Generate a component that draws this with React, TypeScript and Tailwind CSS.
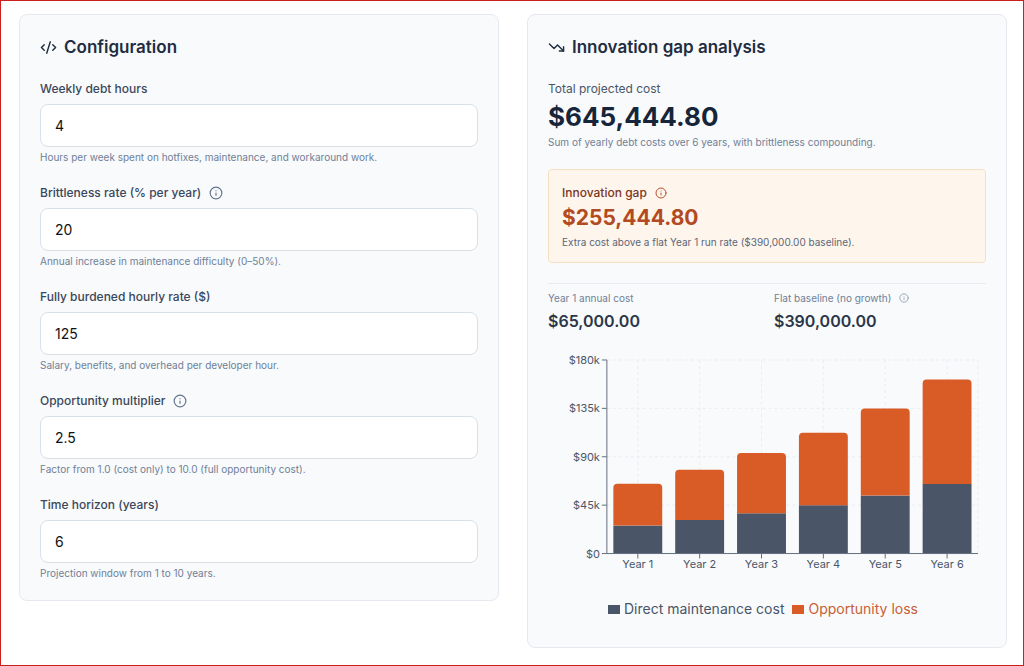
import { useState } from "react";
import { CodeXml, Info, TrendingDown } from "lucide-react";

const fields = [
  {
    id: "debt-hours",
    label: "Weekly debt hours",
    value: "4",
    hint: "Hours per week spent on hotfixes, maintenance, and workaround work.",
    info: false,
  },
  {
    id: "brittleness",
    label: "Brittleness rate (% per year)",
    value: "20",
    hint: "Annual increase in maintenance difficulty (0–50%).",
    info: true,
  },
  {
    id: "hourly-rate",
    label: "Fully burdened hourly rate ($)",
    value: "125",
    hint: "Salary, benefits, and overhead per developer hour.",
    info: false,
  },
  {
    id: "multiplier",
    label: "Opportunity multiplier",
    value: "2.5",
    hint: "Factor from 1.0 (cost only) to 10.0 (full opportunity cost).",
    info: true,
  },
  {
    id: "horizon",
    label: "Time horizon (years)",
    value: "6",
    hint: "Projection window from 1 to 10 years.",
    info: false,
  },
];

// yearly cost in thousands
const years = [
  { name: "Year 1", direct: 26, loss: 39 },
  { name: "Year 2", direct: 31.2, loss: 46.8 },
  { name: "Year 3", direct: 37.44, loss: 56.16 },
  { name: "Year 4", direct: 44.93, loss: 67.39 },
  { name: "Year 5", direct: 53.91, loss: 80.87 },
  { name: "Year 6", direct: 64.7, loss: 97.04 },
];

const ticks = [0, 45, 90, 135, 180];

const plot = { left: 59, right: 431, top: 8, bottom: 202 };
const step = (plot.right - plot.left) / years.length;
const barWidth = 49;
const yFor = (value: number) =>
  plot.bottom - (value / 180) * (plot.bottom - plot.top);

function CostChart() {
  return (
    <svg
      viewBox="0 0 439 224"
      role="img"
      aria-label="Cost per year"
      className="block w-full"
    >
      <g stroke="#e2e8f0" strokeDasharray="3 3" strokeOpacity="0.7">
        {ticks.map((tick) => (
          <line
            key={tick}
            x1={plot.left}
            x2={plot.right}
            y1={yFor(tick)}
            y2={yFor(tick)}
          />
        ))}
        {years.map((year, i) => (
          <line
            key={year.name}
            x1={plot.left + step * (i + 0.5)}
            x2={plot.left + step * (i + 0.5)}
            y1={plot.top}
            y2={plot.bottom}
          />
        ))}
        <line x1={plot.right} x2={plot.right} y1={plot.top} y2={plot.bottom} />
      </g>

      {years.map((year, i) => {
        const x = plot.left + step * (i + 0.5) - barWidth / 2;
        const top = yFor(year.direct + year.loss);
        const mid = yFor(year.direct);
        return (
          <g key={year.name}>
            <rect
              x={x}
              y={mid}
              width={barWidth}
              height={plot.bottom - mid}
              fill="#4a5568"
            />
            <path
              d={`M${x} ${mid}V${top + 4}q0-4 4-4h${barWidth - 8}q4 0 4 4V${mid}z`}
              fill="#d95b26"
            />
          </g>
        );
      })}

      <g stroke="#64707f">
        <line x1={plot.left} x2={plot.left} y1={plot.top} y2={plot.bottom} />
        <line
          x1={plot.left}
          x2={plot.right}
          y1={plot.bottom}
          y2={plot.bottom}
        />
        {ticks.map((tick) => (
          <line
            key={tick}
            x1={plot.left - 5}
            x2={plot.left}
            y1={yFor(tick)}
            y2={yFor(tick)}
          />
        ))}
        {years.map((year, i) => (
          <line
            key={year.name}
            x1={plot.left + step * (i + 0.5)}
            x2={plot.left + step * (i + 0.5)}
            y1={plot.bottom}
            y2={plot.bottom + 5}
          />
        ))}
      </g>

      <g fill="#4a5568" className="text-[11px]">
        {ticks.map((tick) => (
          <text key={tick} x="52" y={yFor(tick) + 4} textAnchor="end">
            {tick === 0 ? "$0" : `$${tick}k`}
          </text>
        ))}
        {years.map((year, i) => (
          <text
            key={year.name}
            x={plot.left + step * (i + 0.5)}
            y="216"
            textAnchor="middle"
          >
            {year.name}
          </text>
        ))}
      </g>
    </svg>
  );
}

function Configuration() {
  const [values, setValues] = useState(fields.map((field) => field.value));

  return (
    <section className="rounded-lg border border-[#e5e9ef] bg-[#f8fafc] p-5">
      <h2 className="flex items-center gap-[7px] text-[17px] leading-6 font-semibold text-[#1e2d3f]">
        <CodeXml size={17} />
        Configuration
      </h2>
      <div className="mt-5 flex flex-col gap-[19px]">
        {fields.map((field, i) => (
          <div key={field.id}>
            <div className="flex items-center gap-2 text-[12px] leading-5 font-medium text-[#3b475a]">
              <label htmlFor={field.id}>{field.label}</label>
              {field.info && (
                <button type="button" aria-label={`About ${field.label}`}>
                  <Info size={14} className="text-[#64748b]" />
                </button>
              )}
            </div>
            <input
              id={field.id}
              type="text"
              inputMode="decimal"
              value={values[i]}
              onChange={(e) =>
                setValues(values.map((v, j) => (j === i ? e.target.value : v)))
              }
              className="mt-[5px] block h-[43px] w-full rounded-lg border border-[#d9e0e8] bg-white px-3.5 text-[14px] text-[#111]"
            />
            <p className="mt-[3px] text-[10px] leading-[14px] text-[#718096]">
              {field.hint}
            </p>
          </div>
        ))}
      </div>
    </section>
  );
}

function Analysis() {
  return (
    <section className="rounded-lg border border-[#e5e9ef] bg-[#f8fafc] p-5">
      <h2 className="flex items-center gap-[7px] text-[17px] leading-6 font-semibold text-[#1e2d3f]">
        <TrendingDown size={17} />
        Innovation gap analysis
      </h2>

      <div className="mt-5">
        <p className="text-[12px] leading-5 text-[#4a5568]">
          Total projected cost
        </p>
        <p className="text-[26px] leading-9 font-bold text-[#17253b]">
          $645,444.80
        </p>
        <p className="text-[10px] leading-[14px] text-[#718096]">
          Sum of yearly debt costs over 6 years, with brittleness compounding.
        </p>
      </div>

      <div className="mt-5 rounded border border-[#f6dfc3] bg-[#fef6ec] p-[13px]">
        <div className="flex items-center gap-2 text-[12px] leading-5 font-medium text-[#7b341e]">
          Innovation gap
          <button type="button" aria-label="About innovation gap">
            <Info size={12} className="text-[#b7522f]" />
          </button>
        </div>
        <p className="text-[21px] leading-[30px] font-bold text-[#b24a22]">
          $255,444.80
        </p>
        <p className="mt-0.5 text-[10px] leading-[14px] text-[#5b6678]">
          Extra cost above a flat Year 1 run rate ($390,000.00 baseline).
        </p>
      </div>

      <div className="mt-5 grid grid-cols-2 gap-[14px] border-t border-[#e8ecf2] pt-[7px]">
        <div>
          <p className="text-[10px] leading-[14px] text-[#718096]">
            Year 1 annual cost
          </p>
          <p className="mt-1 text-[16px] leading-6 font-semibold text-[#2a3648]">
            $65,000.00
          </p>
        </div>
        <div>
          <div className="flex items-center gap-2 text-[10px] leading-[14px] text-[#718096]">
            Flat baseline (no growth)
            <button type="button" aria-label="About flat baseline">
              <Info size={10} className="text-[#8a97a9]" />
            </button>
          </div>
          <p className="mt-1 text-[16px] leading-6 font-semibold text-[#2a3648]">
            $390,000.00
          </p>
        </div>
      </div>

      <div className="mt-[19px]">
        <CostChart />
        <ul className="mt-6 flex justify-center gap-2 pr-2 pb-2 text-[14px] leading-5">
          <li className="flex items-center gap-1 text-[#4a5568]">
            <span className="h-[9px] w-3 bg-[#4a5568]" />
            Direct maintenance cost
          </li>
          <li className="flex items-center gap-1 text-[#c95f35]">
            <span className="h-[9px] w-3 bg-[#d95b26]" />
            Opportunity loss
          </li>
        </ul>
      </div>
    </section>
  );
}

export default function App() {
  return (
    <main className="min-h-screen border border-[#cc1f1f] bg-white pt-[13px] pr-4 pb-4 pl-[18px] font-[Inter,sans-serif]">
      <div className="grid grid-cols-2 items-start gap-7">
        <Configuration />
        <Analysis />
      </div>
    </main>
  );
}
